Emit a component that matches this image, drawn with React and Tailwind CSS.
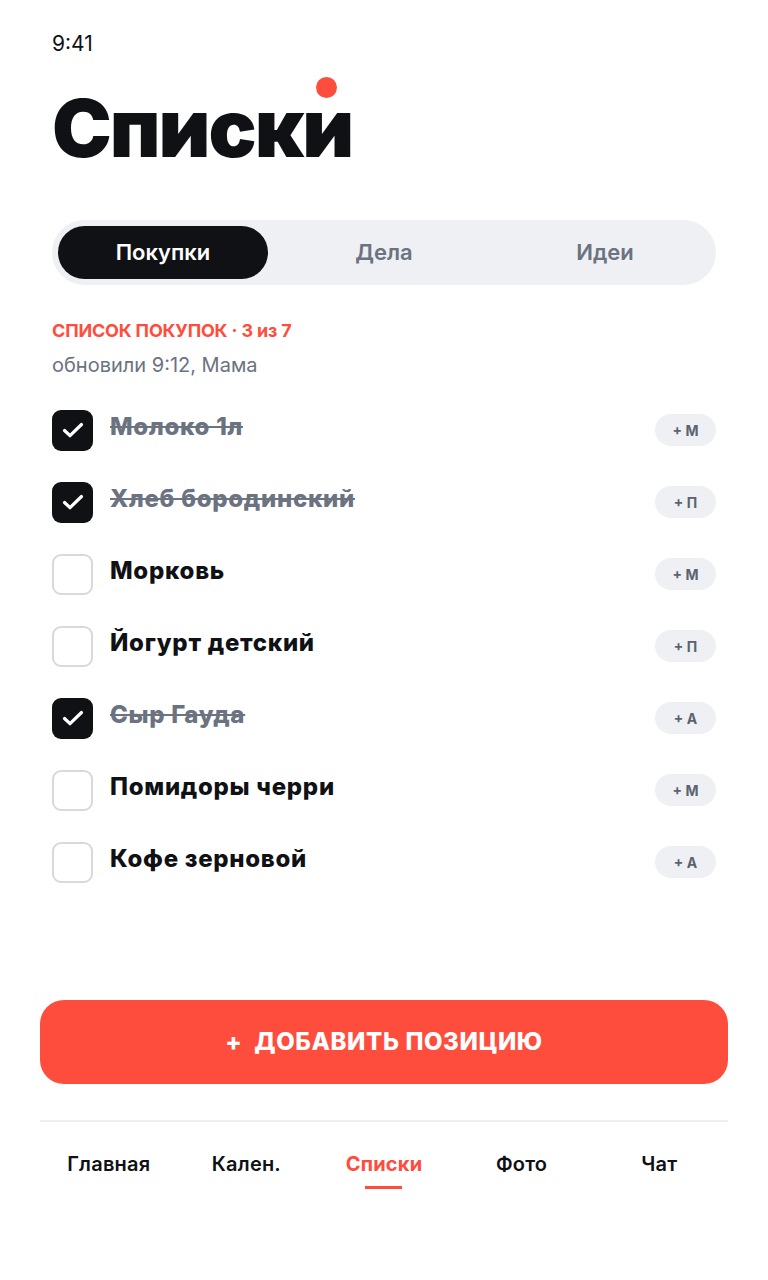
import { useState } from 'react';

const ITEMS = [
  { id: 1, name: 'Молоко 1л', who: 'М', done: true },
  { id: 2, name: 'Хлеб бородинский', who: 'П', done: true },
  { id: 3, name: 'Морковь', who: 'М', done: false },
  { id: 4, name: 'Йогурт детский', who: 'П', done: false },
  { id: 5, name: 'Сыр Гауда', who: 'А', done: true },
  { id: 6, name: 'Помидоры черри', who: 'М', done: false },
  { id: 7, name: 'Кофе зерновой', who: 'А', done: false },
];

const TABS = ['Покупки', 'Дела', 'Идеи'];
const NAV = ['Главная', 'Кален.', 'Списки', 'Фото', 'Чат'];

function Check() {
  return (
    <svg width="26" height="26" viewBox="0 0 26 26" fill="none">
      <path d="M4.5 13.5l5.5 5.2L21.5 7.5" stroke="white" strokeWidth="3.2" strokeLinecap="round" strokeLinejoin="round" />
    </svg>
  );
}

export default function App() {
  const [items, setItems] = useState(ITEMS);
  const [tab, setTab] = useState('Покупки');

  const doneCount = items.filter((i) => i.done).length;

  function toggle(id) {
    setItems((prev) => prev.map((i) => i.id === id ? { ...i, done: !i.done } : i));
  }

  return (
    <div className="min-h-[1280px] bg-white px-10 pt-8 font-['Inter','Noto_Sans',sans-serif] text-[#0f1115]">
      <div className="px-3">
        <p className="text-[21px] leading-6 font-normal">9:41</p>

        {/* Title */}
        <div className="mt-8 relative inline-block">
          <h1 className="text-[80px] leading-[80px] font-black tracking-[-0.025em]">Списки</h1>
          <span className="absolute left-[264px] top-[-11px] w-[21px] h-[21px] rounded-full bg-[#ff4d3d]" />
        </div>

        {/* Segmented control */}
        <div className="mt-[52px] grid grid-cols-3 gap-[11px] p-[6px] rounded-full bg-[#eef0f4]">
          {TABS.map((t) => (
            <button
              key={t}
              onClick={() => setTab(t)}
              className={`h-[53px] rounded-full text-[22px] font-semibold ${tab === t ? 'bg-[#0f1115] text-white' : 'text-[#6b7280]'}`}
            >
              {t}
            </button>
          ))}
        </div>

        {/* Header */}
        <p className="mt-9 text-[18px] leading-5 font-bold text-[#ff4d3d] tracking-[-0.01em]">
          СПИСОК ПОКУПОК · {doneCount} из {items.length}
        </p>
        <p className="mt-3 text-[20px] leading-6 text-[#6b7280]">обновили 9:12, Мама</p>

        {/* Items */}
        <div className="mt-[17px]">
          {items.map((it) => (
            <div key={it.id} className="h-[72px] flex items-center gap-[17px]">
              <button
                onClick={() => toggle(it.id)}
                className={`w-[41px] h-[41px] rounded-[9px] flex items-center justify-center shrink-0 ${it.done ? 'bg-[#0f1115]' : 'border-2 border-[#d6d9df] bg-white'}`}
              >
                {it.done && <Check />}
              </button>
              <span className={`flex-1 -mt-[7px] text-[24px] font-extrabold tracking-[0.03em] ${it.done ? 'text-[#6b7280] line-through decoration-2' : 'text-[#0f1115]'}`}>
                {it.name}
              </span>
              <span className="w-[61px] h-[32px] rounded-full bg-[#eef0f4] flex items-center justify-center text-[14px] font-bold text-[#5b6270]">
                + {it.who}
              </span>
            </div>
          ))}
        </div>
      </div>

      {/* Add button */}
      <button className="mt-[102px] w-full h-[84px] rounded-[24px] bg-[#ff4d3d] text-white text-[24px] font-extrabold tracking-[0.025em] flex items-center justify-center gap-3">
        <span>+</span>
        <span>ДОБАВИТЬ ПОЗИЦИЮ</span>
      </button>

      {/* Bottom nav */}
      <div className="mt-[36px] border-t-2 border-[#eef0f4] grid grid-cols-5 pt-[30px]">
        {NAV.map((n) => (
          <div key={n} className="flex flex-col items-center">
            <span className={`text-[20px] leading-6 tracking-[0.01em] ${n === 'Списки' ? 'text-[#ff4d3d] font-bold' : 'text-[#0f1115] font-semibold'}`}>
              {n}
            </span>
            {n === 'Списки' && <span className="mt-[10px] w-[37px] h-[3px] bg-[#ff4d3d]" />}
          </div>
        ))}
      </div>
    </div>
  );
}
